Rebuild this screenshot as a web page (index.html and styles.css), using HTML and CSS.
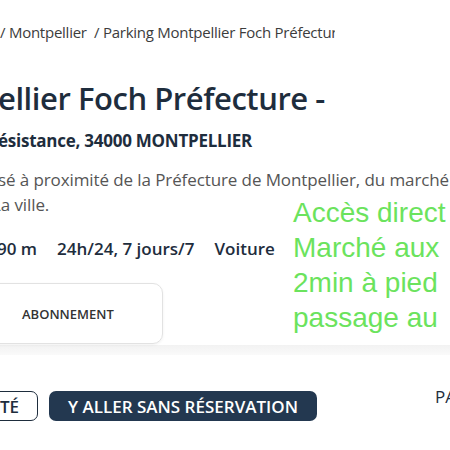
FILE: index.html
```html
<!DOCTYPE html>
<html lang="fr">
<head>
  <meta charset="UTF-8">
  <meta name="viewport" content="width=device-width, initial-scale=1.0">
  <title>Parking Montpellier Foch Préfecture</title>
  <link rel="stylesheet" href="styles.css">
</head>
<body>
  <div class="page">
    <section class="info">
      <nav class="crumbs">/ Montpellier &nbsp;/ Parking Montpellier Foch Préfecture</nav>
      <h1 class="title">ellier Foch Préfecture -</h1>
      <p class="address">ésistance, 34000 MONTPELLIER</p>
      <div class="desc">
        <p class="desc-line">sé à proximité de la Préfecture de Montpellier, du marché</p>
        <p class="desc-line desc-last">La ville.</p>
      </div>
      <ul class="facts">
        <li>90 m</li>
        <li>24h/24, 7 jours/7</li>
        <li>Voiture</li>
      </ul>
      <div class="offers">
        <div class="offer">ABONNEMENT</div>
      </div>
      <!-- annotation collée par-dessus la capture -->
      <div class="note">Accès direct<br>Marché aux<br>2min à pied<br>passage au</div>
    </section>
    <div class="band"></div>
    <div class="actions">
      <a class="btn btn-outline" href="#">TÉ</a>
      <a class="btn btn-dark" href="#">Y ALLER SANS RÉSERVATION</a>
      <span class="more">PA</span>
    </div>
  </div>
</body>
</html>
```

FILE: styles.css
```css
html, body {
  margin: 0;
  padding: 0;
  background-color: #fff;
  font-family: "Open Sans", "Noto Sans", sans-serif;
  color: #1e2d3d;
  overflow: hidden;
}
.page {
  width: 450px;
  height: 450px;
  overflow: hidden;
}
.info {
  position: relative;
  padding-top: 22px;
  height: 323px;
}
.crumbs {
  width: 335px;
  overflow: hidden;
  white-space: nowrap;
  font-size: 15px;
  line-height: 20px;
  letter-spacing: -0.25px;
  color: #3c3c3c;
}
.title {
  margin: 38px 0 0 -2px;
  font-size: 31px;
  line-height: 36px;
  font-weight: 600;
  letter-spacing: -0.45px;
  white-space: nowrap;
}
.address {
  margin: 13px 0 0 -2px;
  font-size: 17px;
  line-height: 24px;
  font-weight: 700;
  letter-spacing: -0.25px;
  white-space: nowrap;
}
.desc {
  margin-top: 14px;
  font-size: 17px;
  line-height: 25px;
  letter-spacing: -0.1px;
  color: #555;
  white-space: nowrap;
}
.desc-line {
  margin: 0 0 0 -2px;
}
.desc-last {
  margin-left: -8px;
}
.facts {
  display: flex;
  gap: 20px;
  list-style: none;
  margin: 20px 0 0 -3px;
  padding: 0;
  font-size: 17px;
  line-height: 24px;
  font-weight: 600;
}
.offers {
  display: flex;
  margin-top: 22px;
}
.offer {
  width: 176px;
  height: 61px;
  margin-left: -13px;
  padding-left: 34px;
  box-sizing: border-box;
  display: flex;
  align-items: center;
  border: 1px solid #e2e2e2;
  border-radius: 10px;
  box-shadow: 0 1px 3px rgba(0,0,0,0.06);
  font-size: 13px;
  font-weight: 600;
  color: #333;
}
.note {
  position: absolute;
  left: 293px;
  top: 195px;
  font-family: "Liberation Sans", Arial, sans-serif;
  font-size: 28px;
  line-height: 35px;
  color: #6be35d;
  white-space: nowrap;
}
.band {
  height: 10px;
  background: linear-gradient(#f2f2f2, #fafafa);
}
.actions {
  display: flex;
  align-items: center;
  gap: 11px;
  margin-top: 36px;
}
.btn {
  display: flex;
  align-items: center;
  height: 30px;
  box-sizing: border-box;
  border-radius: 7px;
  font-size: 17px;
  font-weight: 600;
  text-decoration: none;
  white-space: nowrap;
}
.btn-outline {
  margin-left: -20px;
  width: 58px;
  padding-left: 19px;
  border: 1px solid #1e2d3d;
  color: #1e2d3d;
}
.btn-dark {
  width: 268px;
  justify-content: center;
  background-color: #233850;
  color: #fff;
}
.more {
  margin-left: auto;
  margin-right: -6px;
  align-self: flex-start;
  margin-top: -6px;
  font-size: 17px;
  font-weight: 500;
  color: #1e2d3d;
}
```
